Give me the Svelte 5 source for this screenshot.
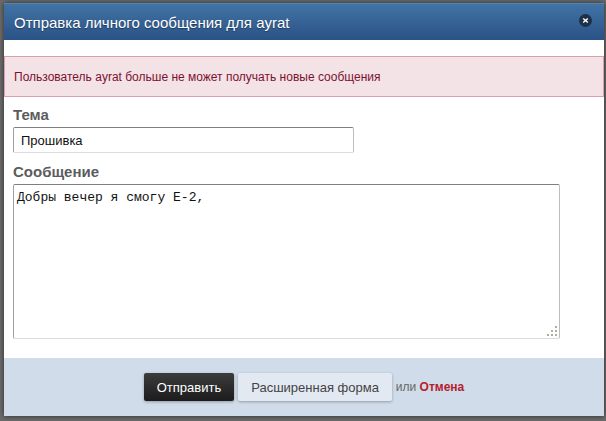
<script lang="ts">
	let subject = $state('Прошивка');
	let message = $state('Добры вечер я смогу Е-2,');

	const recipient = 'ayrat';
</script>

<div class="backdrop">
	<div class="dialog" role="dialog" aria-labelledby="dialog-title">
		<header>
			<h1 id="dialog-title">Отправка личного сообщения для {recipient}</h1>
			<button type="button" class="close" aria-label="Закрыть">
				<svg viewBox="0 0 13 13" width="13" height="13">
					<circle cx="6.5" cy="6.5" r="6.5" fill="#1d3049" />
					<path d="M4.2 4.5l4.6 4M8.8 4.5l-4.6 4" stroke="#fff" stroke-width="1.5" />
				</svg>
			</button>
		</header>

		<p class="alert" role="alert">Пользователь {recipient} больше не может получать новые сообщения</p>

		<form onsubmit={(e) => e.preventDefault()}>
			<div class="fields">
				<label for="subject">Тема</label>
				<input id="subject" type="text" bind:value={subject} />

				<label for="message">Сообщение</label>
				<div class="message">
					<textarea id="message" bind:value={message} spellcheck="false"></textarea>
					<svg class="grip" viewBox="0 0 10 10" width="10" height="10" fill="#b0aca0">
						<path d="M8 0h2v2h-2zM4 4h2v2h-2zM8 4h2v2h-2zM0 8h2v2h-2zM4 8h2v2h-2zM8 8h2v2h-2z" />
					</svg>
				</div>
			</div>

			<footer>
				<button type="submit" class="send">Отправить</button>
				<button type="button" class="advanced">Расширенная форма</button>
				<span>или <a href="#cancel">Отмена</a></span>
			</footer>
		</form>
	</div>
</div>

<style>
	:global(body) {
		background: #6b6b6b;
	}

	.backdrop {
		padding: 3px 2px 5px 4px;
		font-family: 'Liberation Sans', Arial, sans-serif;
		font-size: 12px;
	}

	.dialog {
		background: #fff;
		box-shadow: 0 0 5px rgba(0, 0, 0, 0.6);
	}

	header {
		display: flex;
		align-items: center;
		justify-content: space-between;
		height: 37px;
		padding: 0 12px 0 10px;
		box-sizing: border-box;
		border-top: 1px solid #4f86b8;
		background: linear-gradient(#4273a5, #2a5285);
	}

	h1 {
		margin: 0;
		color: #fff;
		font-size: 15px;
		font-weight: normal;
		text-shadow: 0 1px 1px rgba(0, 0, 0, 0.4);
	}

	.close {
		display: flex;
		margin-bottom: 3px;
		padding: 0;
		border: none;
		background: none;
		cursor: pointer;
	}

	.alert {
		margin: 16px 0 0;
		padding: 1px 9px 0;
		border: 1px solid #d9a0b2;
		background: #f3e2e6;
		color: #7c1230;
		line-height: 38px;
	}

	.fields {
		display: flex;
		flex-direction: column;
		align-items: flex-start;
		padding: 9px 44px 19px 9px;
	}

	label {
		margin-bottom: 3px;
		color: #5c5c5c;
		font-size: 15px;
		font-weight: bold;
		line-height: 18px;
	}

	input,
	textarea {
		box-sizing: border-box;
		border: 1px solid;
		border-color: #7f7f7f #bdbdbd #dcdcdc #a0a0a0;
		border-radius: 2px;
		outline: none;
		background: #fff;
		color: #111;
	}

	input {
		width: 341px;
		max-width: 100%;
		height: 26px;
		margin-bottom: 10px;
		padding: 0 7px;
		font-family: inherit;
		font-size: 13px;
	}

	.message {
		position: relative;
		width: 100%;
	}

	textarea {
		display: block;
		width: 100%;
		height: 155px;
		padding: 5px 3px;
		resize: none;
		font-family: 'Liberation Mono', 'Courier New', monospace;
		font-size: 13px;
		line-height: 16px;
	}

	.grip {
		position: absolute;
		right: 3px;
		bottom: 3px;
		pointer-events: none;
	}

	footer {
		display: flex;
		align-items: center;
		justify-content: center;
		gap: 4px;
		padding: 15px 0;
		background: #d1dcea;
		color: #666;
	}

	footer button {
		height: 28px;
		padding: 0 13px;
		border: none;
		border-radius: 2px;
		box-shadow: 0 1px 3px rgba(0, 0, 0, 0.3);
		font-family: inherit;
		font-size: 13px;
		cursor: pointer;
	}

	.send {
		background: linear-gradient(#3c3c3c, #1c1c1c);
		color: #fff;
	}

	.advanced {
		background: #e3e9f2;
		color: #444;
	}

	a {
		color: #b5202e;
		font-weight: bold;
		text-decoration: none;
	}
</style>
